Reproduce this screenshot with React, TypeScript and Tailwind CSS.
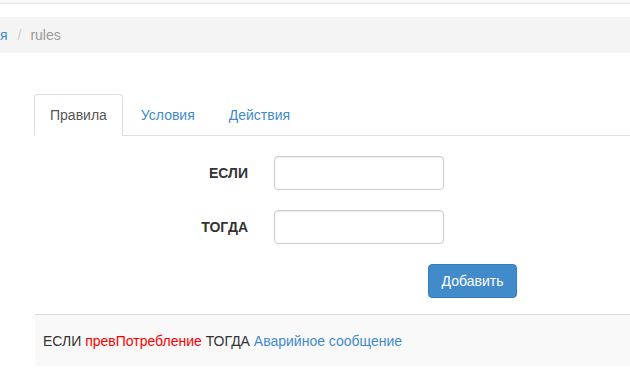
import React from "react";

export default function App() {
  return (
    <div
      className="w-[630px] h-[386px] overflow-hidden bg-white text-[14px] leading-[20px] text-[#333]"
      style={{ fontFamily: '"Liberation Sans", Arial, sans-serif' }}
    >
      <div className="h-[4px] bg-[#f8f8f8] border-b border-[#e7e7e7]" />
      <div className="mt-[13px] h-[36px] bg-[#f4f4f4] flex items-center whitespace-nowrap">
        <span className="text-[#428bca]">я</span>
        <span className="ml-[5px] px-[5px] text-[#ccc]">/&nbsp;</span>
        <span className="text-[#999]">rules</span>
      </div>

      <div className="pl-[34px] mt-[41px]">
        <div className="flex border-b border-[#ddd] h-[42px]">
          <div className="h-[42px] px-[15px] flex items-center border border-[#ddd] border-b-white bg-white rounded-t-[4px] text-[#555]">
            Правила
          </div>
          <div className="ml-[2px] h-[42px] px-[16px] flex items-center text-[#428bca]">
            Условия
          </div>
          <div className="ml-[2px] h-[42px] px-[16px] flex items-center text-[#428bca]">
            Действия
          </div>
        </div>

        <div className="mt-[20px] flex flex-col gap-[20px]">
          <div className="flex items-center">
            <label className="w-[214px] text-right font-bold">ЕСЛИ</label>
            <input className="ml-[26px] w-[170px] h-[34px] border border-[#ccc] rounded-[4px] bg-white shadow-[inset_0_1px_1px_rgba(0,0,0,0.075)]" />
          </div>
          <div className="flex items-center">
            <label className="w-[214px] text-right font-bold">ТОГДА</label>
            <input className="ml-[26px] w-[170px] h-[34px] border border-[#ccc] rounded-[4px] bg-white shadow-[inset_0_1px_1px_rgba(0,0,0,0.075)]" />
          </div>
          <div className="flex">
            <button className="ml-[394px] w-[89px] h-[34px] bg-[#428bca] border border-[#357ebd] rounded-[4px] text-white">
              Добавить
            </button>
          </div>
        </div>

        <div className="mt-[16px] ml-[1px] h-[52px] bg-[#f9f9f9] border-t border-[#ddd] flex items-center pl-[8px] whitespace-nowrap">
          <span>ЕСЛИ&nbsp;</span>
          <span className="text-[#ff0000]">превПотребление</span>
          <span>&nbsp;ТОГДА&nbsp;</span>
          <span className="text-[#428bca]">Аварийное сообщение</span>
        </div>
      </div>
    </div>
  );
}
